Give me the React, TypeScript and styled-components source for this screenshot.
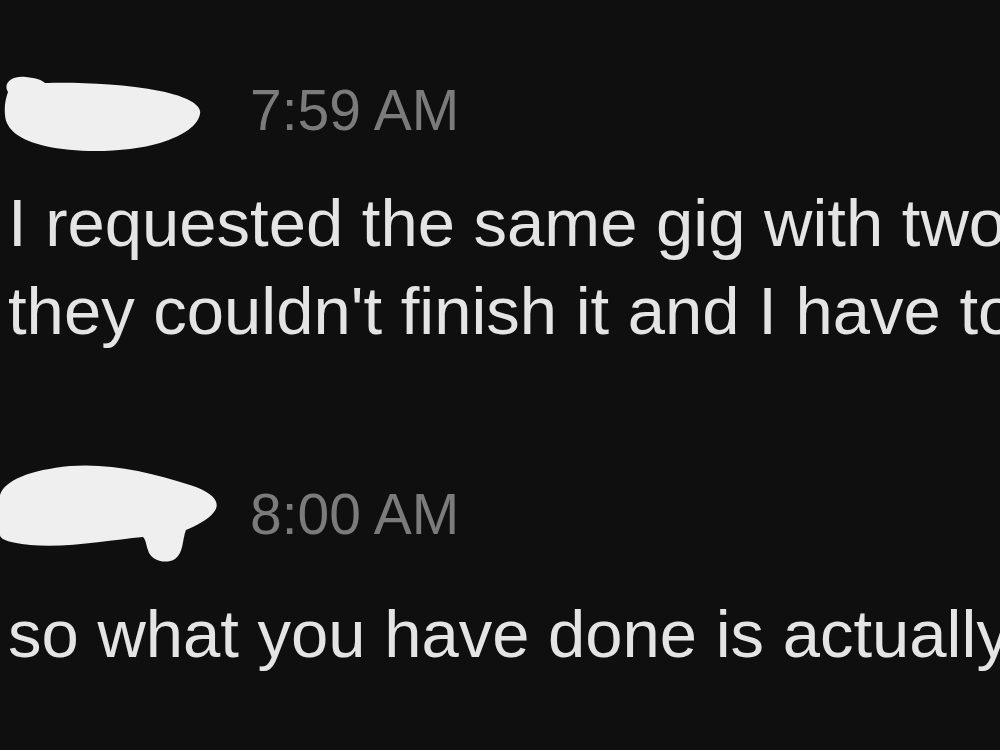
import styled, { createGlobalStyle } from "styled-components";

const GlobalStyle = createGlobalStyle`
  html, body {
    margin: 0;
    background: #0f0f0f;
  }
  #root {
    min-height: 100vh;
  }
`;

const Page = styled.div`
  width: 1000px;
  height: 750px;
  overflow: hidden;
  padding-top: 68px;
  box-sizing: border-box;
  display: flex;
  flex-direction: column;
  gap: 110px;
  font-family: "Liberation Sans", Arial, sans-serif;
`;

const Message = styled.div`
  display: flex;
  flex-direction: column;
  gap: 27px;
`;

const Header = styled.div`
  display: grid;
  grid-template-columns: 250px auto;
  align-items: center;
`;

const Time = styled.span`
  color: #7b7b7b;
  font-size: 57px;
  line-height: 64px;
`;

const Body = styled.div`
  padding-left: 8px;
  color: #e4e4e4;
  font-size: 67px;
  line-height: 88px;
  white-space: nowrap;
`;

const Line = styled.span`
  display: block;
`;

// hand-drawn blobs covering the sender names
function NameBlobTop() {
  return (
    <svg width="210" height="84" viewBox="0 68 210 84">
      <path
        fill="#efefef"
        d="M 8 92 C 2 82, 14 75, 26 77 C 36 78, 42 80, 45 83 C 70 82, 120 83, 160 91 C 190 97, 202 106, 200 114 C 198 125, 185 135, 160 143 C 130 152, 80 154, 45 146 C 20 140, 6 130, 5 115 C 4 105, 6 98, 8 92 Z"
      />
    </svg>
  );
}

function NameBlobBottom() {
  return (
    <svg width="222" height="98" viewBox="0 465 222 98">
      <path
        fill="#efefef"
        d="M 0 495 C 5 480, 30 470, 70 466 C 110 463, 150 472, 190 485 C 212 492, 222 502, 214 512 C 208 520, 195 526, 186 530 C 182 540, 184 552, 175 559 C 165 565, 150 560, 148 550 C 146 545, 146 540, 143 537 C 110 540, 70 548, 30 545 C 12 543, 0 540, 0 535 Z"
      />
    </svg>
  );
}

export default function App() {
  return (
    <>
      <GlobalStyle />
      <Page>
        <Message>
          <Header>
            <NameBlobTop />
            <Time>7:59 AM</Time>
          </Header>
          <Body>
            <Line>I requested the same gig with two other sellers</Line>
            <Line>they couldn't finish it and I have to pay again</Line>
          </Body>
        </Message>
        <Message>
          <Header>
            <NameBlobBottom />
            <Time>8:00 AM</Time>
          </Header>
          <Body>
            <Line>so what you have done is actually great</Line>
          </Body>
        </Message>
      </Page>
    </>
  );
}
